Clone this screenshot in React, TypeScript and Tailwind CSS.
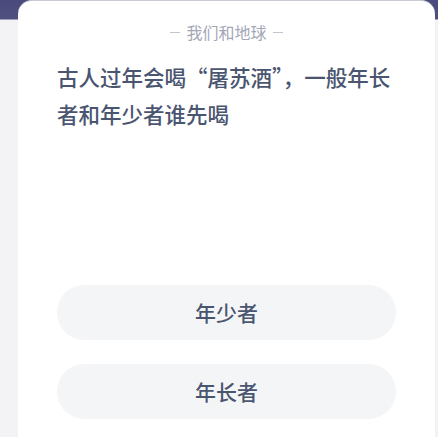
export default function App() {
  return (
    <div
      className="h-[437px] w-[438px] overflow-hidden bg-[linear-gradient(to_bottom,#4a4a7c_0,#4f5080_19px,#f3f3f5_20px)] pl-[18px] pr-[3px]"
      style={{ fontFamily: '"Noto Sans CJK SC", "Noto Sans", sans-serif' }}
    >
      <div className="flex h-full flex-col rounded-t-[14px] border-t border-[#c9cad3] bg-white px-[39px]">
        <div className="mt-[19px] flex items-center justify-center gap-[6px] text-[16px] leading-[24px] text-[#a4a7b6]">
          <span className="h-px w-[10px] bg-[#c2c4cf]" />
          <span>我们和地球</span>
          <span className="h-px w-[10px] bg-[#c2c4cf]" />
        </div>
        <p className="mt-[14px] text-[21.5px] font-medium leading-[37px] text-[#4a5570]">
          古人过年会喝“屠苏酒”，一般年长者和年少者谁先喝
        </p>
        <div className="mt-auto mb-[18px] flex flex-col gap-[24px]">
          <AnswerButton label="年少者" />
          <AnswerButton label="年长者" />
        </div>
      </div>
    </div>
  )
}

function AnswerButton({ label }: { label: string }) {
  return (
    <button
      type="button"
      className="flex h-[55px] w-full items-center justify-center rounded-full bg-[#f4f5f7] text-[21px] font-medium text-[#4a5570]"
    >
      {label}
    </button>
  )
}
